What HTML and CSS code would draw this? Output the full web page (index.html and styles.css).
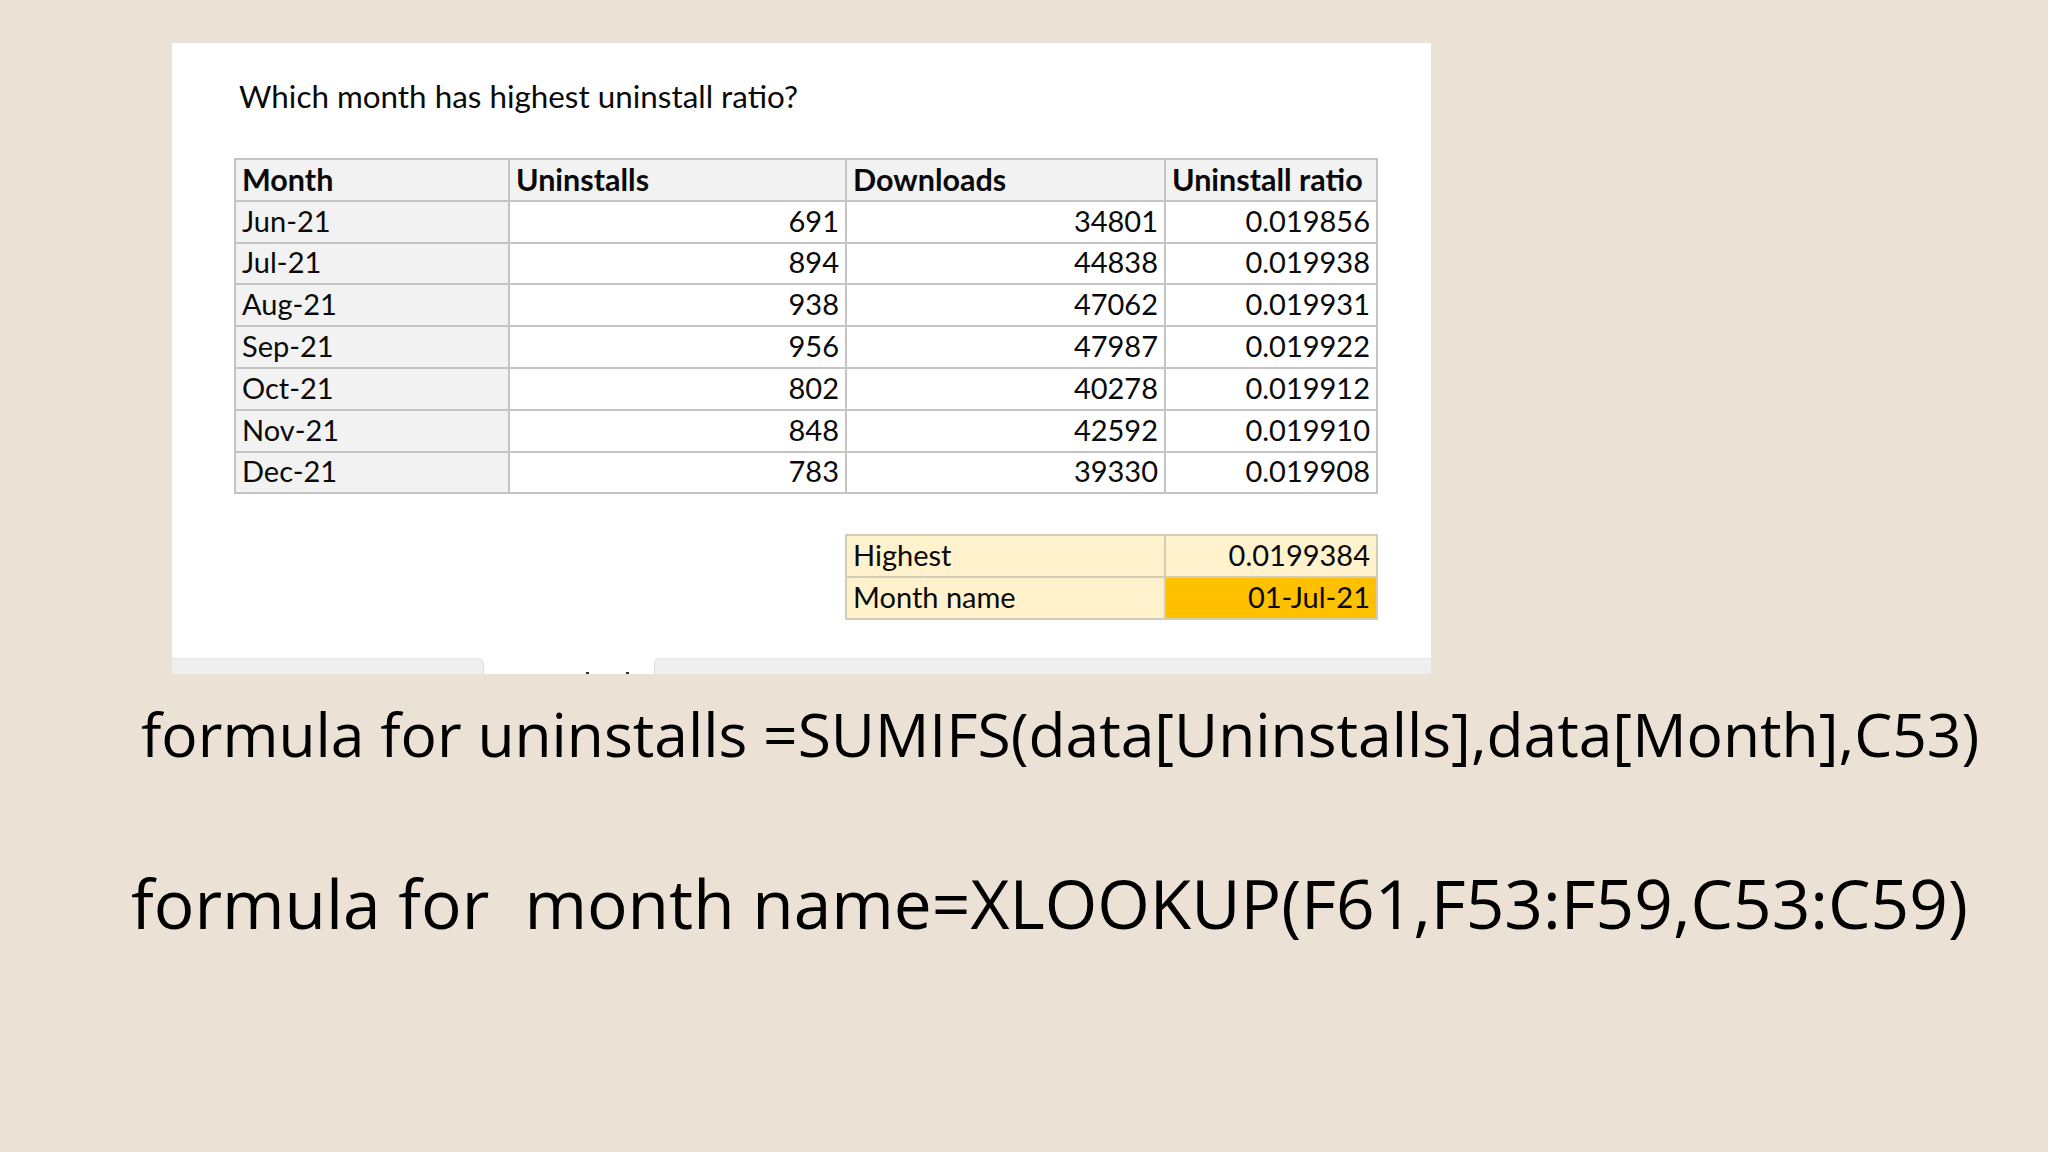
FILE: index.html
```html
<!DOCTYPE html>
<html lang="en">
<head>
<meta charset="utf-8">
<title>Uninstall ratio</title>
<link rel="stylesheet" href="styles.css">
</head>
<body>
<div class="page">
  <section class="sheet">
    <p class="question">Which month has highest uninstall ratio?</p>
    <table class="data">
      <colgroup>
        <col class="c1"><col class="c2"><col class="c3"><col class="c4">
      </colgroup>
      <thead>
        <tr><th>Month</th><th>Uninstalls</th><th>Downloads</th><th>Uninstall ratio</th></tr>
      </thead>
      <tbody>
        <tr><td class="m">Jun-21</td><td class="n">691</td><td class="n">34801</td><td class="n">0.019856</td></tr>
        <tr><td class="m">Jul-21</td><td class="n">894</td><td class="n">44838</td><td class="n">0.019938</td></tr>
        <tr><td class="m">Aug-21</td><td class="n">938</td><td class="n">47062</td><td class="n">0.019931</td></tr>
        <tr><td class="m">Sep-21</td><td class="n">956</td><td class="n">47987</td><td class="n">0.019922</td></tr>
        <tr><td class="m">Oct-21</td><td class="n">802</td><td class="n">40278</td><td class="n">0.019912</td></tr>
        <tr><td class="m">Nov-21</td><td class="n">848</td><td class="n">42592</td><td class="n">0.019910</td></tr>
        <tr><td class="m">Dec-21</td><td class="n">783</td><td class="n">39330</td><td class="n">0.019908</td></tr>
      </tbody>
    </table>
    <table class="summary">
      <colgroup><col class="c3"><col class="c4"></colgroup>
      <tbody>
        <tr><td>Highest</td><td class="n">0.0199384</td></tr>
        <tr><td>Month name</td><td class="n hl">01-Jul-21</td></tr>
      </tbody>
    </table>
    <div class="tabs">
      <div class="tab tab-left"></div>
      <div class="tab-active"><span class="dot"></span><span class="dot"></span></div>
      <div class="tab tab-right"></div>
    </div>
  </section>
  <p class="formula f1">formula for uninstalls =SUMIFS(data[Uninstalls],data[Month],C53)</p>
  <p class="formula f2">formula for&nbsp; month name=XLOOKUP(F61,F53:F59,C53:C59)</p>
</div>
</body>
</html>
```
FILE: styles.css
```css
html, body {
  margin: 0;
  padding: 0;
}
body {
  background: #ece1d5;
  width: 2048px;
  height: 1152px;
  overflow: hidden;
}
.page {
  padding: 43px 0 0 0;
}
.sheet {
  margin-left: 172px;
  width: 1259px;
  height: 631px;
  background: #ffffff;
  display: flex;
  flex-direction: column;
  font-family: Lato, "Open Sans", sans-serif;
  color: #0a0a0a;
}
.question {
  margin: 36px 0 0 67px;
  font-size: 31.4px;
  line-height: 34px;
  height: 79px;
}
table {
  border-collapse: collapse;
  table-layout: fixed;
  font-size: 29px;
  margin-left: 62px;
}
.data {
  width: 1143px;
}
.summary {
  margin-left: 673px;
  margin-top: 40px;
  width: 532px;
}
col.c1 { width: 274px; }
col.c2 { width: 337px; }
col.c3 { width: 319px; }
col.c4 { width: 212px; }
th, td {
  border: 2px solid #c4c4c4;
  height: 41.8px;
  padding: 0 6px 4px 6px;
  box-sizing: border-box;
  vertical-align: bottom;
  line-height: 34px;
  white-space: nowrap;
  overflow: hidden;
}
th {
  background: #f2f2f2;
  font-weight: 700;
  font-size: 30.5px;
  text-align: left;
}
td.m {
  background: #f2f2f2;
}
td.n {
  text-align: right;
}
.summary td {
  background: #fff2cc;
  border-color: #d3cdb8;
}
.summary td.hl {
  background: #ffc000;
}
.tabs {
  margin-top: auto;
  height: 16px;
  display: flex;
}
.tab {
  background: #efefef;
  border-top: 1px solid #e4e4e4;
}
.tab-left {
  width: 311px;
  border-top-right-radius: 6px;
  border-right: 1px solid #dcdcdc;
}
.tab-active {
  width: 170px;
  display: flex;
  align-items: flex-end;
  gap: 37px;
  padding-left: 102px;
  box-sizing: border-box;
}
.dot {
  width: 3px;
  height: 2px;
  background: #333;
}
.tab-right {
  flex: 1;
  border-top-left-radius: 6px;
  border-left: 1px solid #dcdcdc;
}
.formula {
  margin: 0;
  font-family: "Open Sans", sans-serif;
  color: #000;
  white-space: nowrap;
  line-height: 80px;
}
.f1 {
  font-size: 60.5px;
  margin: 20px 0 0 141px;
}
.f2 {
  font-size: 67.6px;
  margin: 89px 0 0 131px;
}
```
